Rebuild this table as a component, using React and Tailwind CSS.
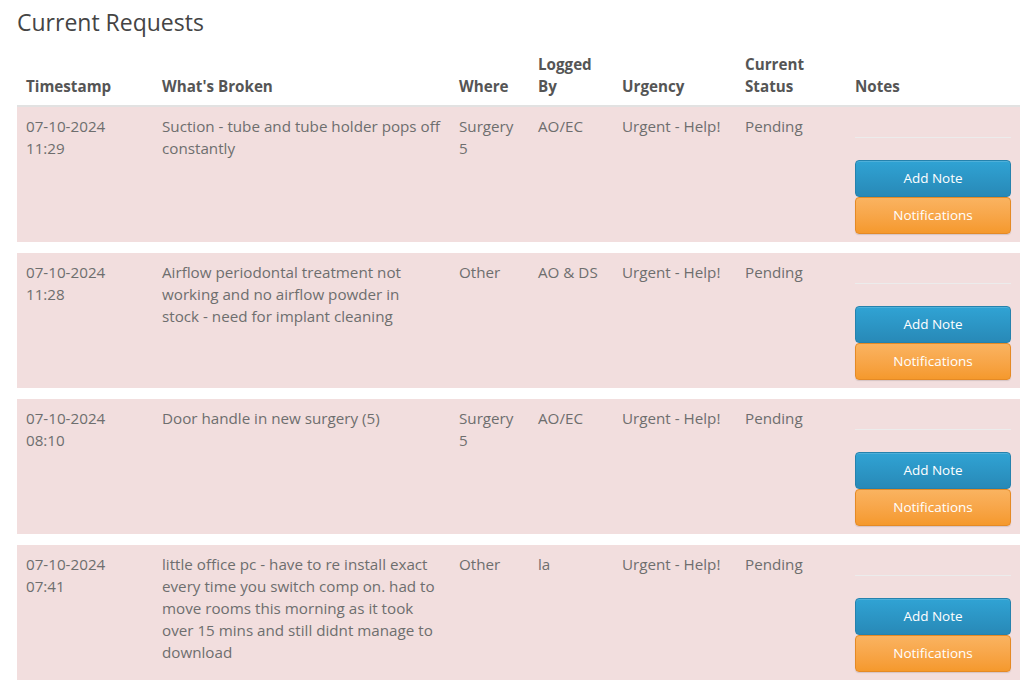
import React from "react";

const rows = [
  {
    ts: ["07-10-2024", "11:29"],
    what: ["Suction - tube and tube holder pops off", "constantly"],
    where: "Surgery 5",
    by: "AO/EC",
  },
  {
    ts: ["07-10-2024", "11:28"],
    what: [
      "Airflow periodontal treatment not",
      "working and no airflow powder in",
      "stock - need for implant cleaning",
    ],
    where: "Other",
    by: "AO & DS",
  },
  {
    ts: ["07-10-2024", "08:10"],
    what: ["Door handle in new surgery (5)"],
    where: "Surgery 5",
    by: "AO/EC",
  },
  {
    ts: ["07-10-2024", "07:41"],
    what: [
      "little office pc - have to re install exact",
      "every time you switch comp on. had to",
      "move rooms this morning as it took",
      "over 15 mins and still didnt manage to",
      "download",
    ],
    where: "Other",
    by: "la",
  },
];

const cols = "grid grid-cols-[136px_297px_79px_84px_123px_110px_174px]";

export default function App() {
  return (
    <div
      className="bg-white h-[685px] overflow-hidden pl-[17px] text-[15.2px] leading-[22px]"
      style={{ fontFamily: '"Open Sans", "Liberation Sans", sans-serif' }}
    >
      <h1 className="pt-[9px] text-[23px] leading-[26px] text-[#444] font-normal">
        Current Requests
      </h1>
      <div className={`${cols} w-[1003px] mt-[10px] border-b-2 border-[#e2e2e2] font-bold text-[#555] items-end`}>
        <div className="px-[9px] pt-[8px] pb-[8px]">Timestamp</div>
        <div className="px-[9px] pt-[8px] pb-[8px]">What's Broken</div>
        <div className="px-[9px] pt-[8px] pb-[8px]">Where</div>
        <div className="px-[9px] pt-[8px] pb-[8px]">Logged By</div>
        <div className="px-[9px] pt-[8px] pb-[8px]">Urgency</div>
        <div className="px-[9px] pt-[8px] pb-[8px]">Current Status</div>
        <div className="px-[9px] pt-[8px] pb-[8px]">Notes</div>
      </div>
      <div className="flex flex-col gap-[11px] w-[1003px]">
        {rows.map((r, i) => (
          <div key={i} className={`${cols} bg-[#f2dede] text-[#6e6e6e] h-[135px]`}>
            <div className="px-[9px] pt-[8px]">
              <div>{r.ts[0]}</div>
              <div>{r.ts[1]}</div>
            </div>
            <div className="pl-[9px] pr-[2px] pt-[8px]">
              {r.what.map((l, j) => (
                <div key={j} className="whitespace-nowrap">{l}</div>
              ))}
            </div>
            <div className="px-[9px] pt-[8px]">{r.where}</div>
            <div className="px-[9px] pt-[8px]">{r.by}</div>
            <div className="px-[9px] pt-[8px]">Urgent - Help!</div>
            <div className="px-[9px] pt-[8px]">Pending</div>
            <div className="px-[9px] pt-[8px] flex flex-col">
              <div className="h-[22px]" />
              <div className="border-t border-[#ececec]" />
              <div className="h-[22px]" />
              <button className="h-[37px] w-full rounded-[4px] border border-[#2582ad] bg-gradient-to-b from-[#30a3d4] to-[#2889b7] text-white text-[13.5px] leading-none shadow-[inset_0_1px_0_rgba(255,255,255,0.15)]">
                Add Note
              </button>
              <button className="h-[37px] w-full rounded-[4px] border border-[#e58a25] bg-gradient-to-b from-[#fab360] to-[#f5992c] text-white text-[13.5px] leading-none shadow-[0_1px_1px_rgba(0,0,0,0.12)]">
                Notifications
              </button>
            </div>
          </div>
        ))}
      </div>
    </div>
  );
}
